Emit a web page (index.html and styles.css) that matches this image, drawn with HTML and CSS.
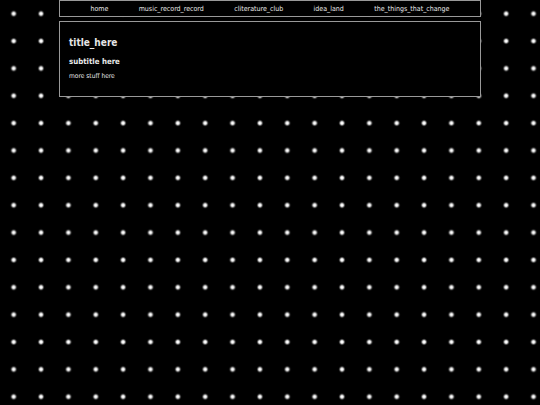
FILE: index.html
```html
<!DOCTYPE html>
<html>
<head>
<meta charset="utf-8">
<link rel="stylesheet" href="styles.css">
</head>
<body>
<div class="wrap">
  <nav class="nav">
    <a href="#">home</a>
    <a href="#">music_record_record</a>
    <a href="#">cliterature_club</a>
    <a href="#">idea_land</a>
    <a href="#">the_things_that_change</a>
  </nav>
  <main class="box">
    <h1 class="title">title_here</h1>
    <h2 class="subtitle">subtitle here</h2>
    <p class="more">more stuff here</p>
  </main>
</div>
</body>
</html>
```
FILE: styles.css
```css
html, body {
  margin: 0;
  padding: 0;
  height: 100%;
}
body {
  background-color: #000;
  background-image: radial-gradient(circle at center, #fff 0, #fff 1.2px, rgba(255,255,255,0.5) 2.1px, rgba(255,255,255,0.1) 3px, rgba(255,255,255,0) 3.6px);
  background-size: 27.37px 27.37px;
  background-position: 0 0;
  font-family: "DejaVu Sans Condensed", "DejaVu Sans", Verdana, sans-serif;
  color: #e8e8e8;
}
.wrap {
  width: 422px;
  margin: 0 0 0 59px;
}
.nav {
  display: flex;
  justify-content: space-evenly;
  align-items: center;
  height: 15px;
  border: 1px solid #999;
  background: #000;
}
.nav a {
  color: #e8e8e8;
  text-decoration: none;
  font-size: 7px;
}
.box {
  margin-top: 4px;
  height: 76px;
  border: 1px solid #999;
  background: #000;
  padding: 0 9px;
  box-sizing: border-box;
}
.title {
  margin: 15px 0 0;
  font-size: 10px;
  font-weight: bold;
  line-height: 12px;
  color: #e6e6e6;
}
.subtitle {
  margin: 8px 0 0;
  font-size: 7.8px;
  font-weight: bold;
  line-height: 10px;
}
.more {
  margin: 5px 0 0;
  font-size: 6.6px;
  line-height: 8px;
}
```
